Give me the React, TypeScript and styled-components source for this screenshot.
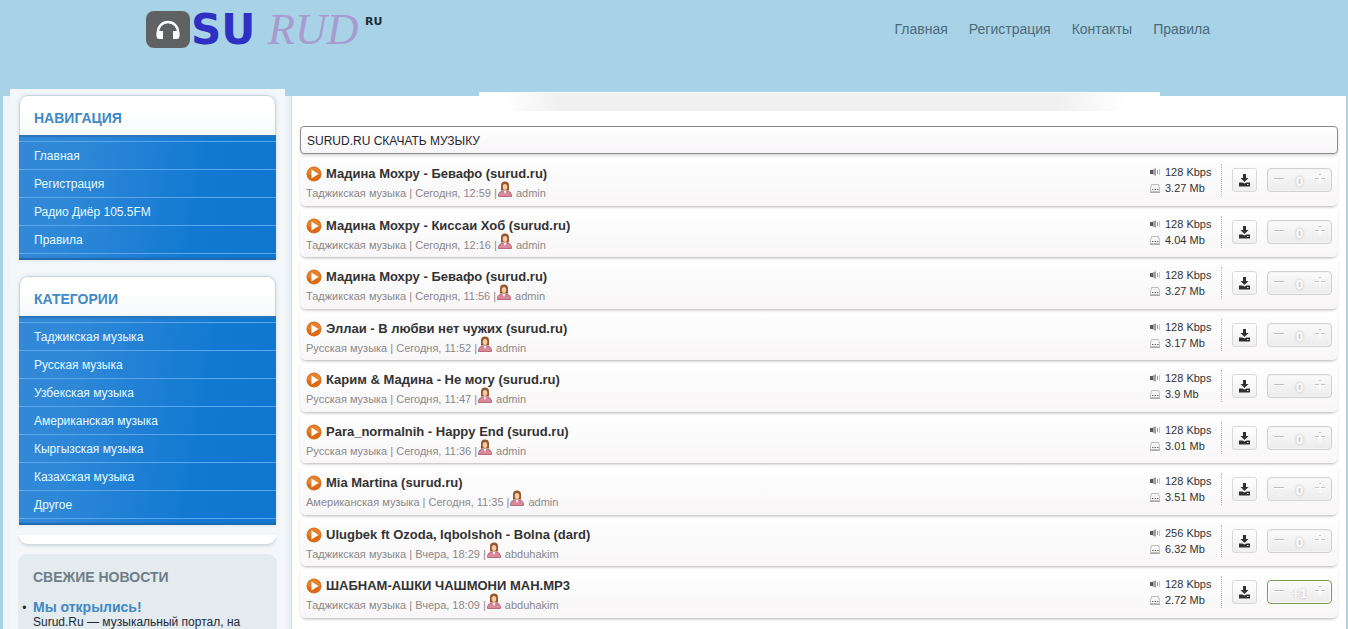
import React from "react";
import styled, { createGlobalStyle } from "styled-components";

const GlobalStyle = createGlobalStyle`
  * { box-sizing: border-box; }
  body { margin: 0; background: #a8d2e6; font-family: "Liberation Sans", Arial, sans-serif; }
  a { color: inherit; text-decoration: none; }
  h1, h2, h3, p, ul, ol { margin: 0; padding: 0; }
`;

const Page = styled.div`
  height: 100vh;
  overflow: hidden;
  padding: 0 2px 0 3px;
  background: #a8d2e6;
`;

const Header = styled.header`
  display: flex;
  justify-content: space-between;
  align-items: flex-start;
  height: 96px;
  padding: 0 136px 0 142px;
`;

const Logo = styled.a`
  display: block;
  line-height: 0;
`;

const TopNav = styled.nav`
  display: flex;
  gap: 21px;
  padding-top: 20px;
  font-size: 14px;
  line-height: 18px;
  color: #4b6b7b;
`;

const Columns = styled.div`
  display: flex;
  align-items: stretch;
  min-height: 533px;
`;

const Sidebar = styled.aside`
  flex: none;
  width: 289px;
  padding: 0 6px 0 7px;
  background: linear-gradient(90deg, #eff5f9 0, #f3f7fa 20px, #f3f7fa 270px, #e9f0f5 100%);
  border-right: 1px solid #ccdbe4;
`;

const SideInner = styled.div`
  margin-top: -7px;
  padding: 6px 8px 0;
  background: #f3f7fa;
`;

const Card = styled.section`
  margin: 0 1px 16px 1px;
  border-radius: 9px 9px 0 0;
  box-shadow: 0 0 4px #d3dfe7;
`;

const CardTitle = styled.h2`
  height: 40px;
  padding: 3px 14px 0;
  border: 1px solid #c5d5df;
  border-bottom: 0;
  border-radius: 9px 9px 0 0;
  background: linear-gradient(#fff 40%, #f5f8f9);
  color: #4189c4;
  font-size: 14px;
  line-height: 38px;
`;

const Menu = styled.ul`
  list-style: none;
  padding: 6px 0;
  background: linear-gradient(100deg, #3389d6 0, #2e87d7 24%, #1279d2 68%, #1077d0 100%);
  box-shadow: inset 0 2px 1px #2a74b9, inset 0 -2px 1px #2169ac;
`;

const MenuItem = styled.li`
  height: 28px;
  border-top: 1px solid #5aa8ea;
  padding: 0 15px;
  font-size: 12px;
  line-height: 28px;
  color: #e4fbff;
  &:last-child { height: 29px; border-bottom: 1px solid #5aa8ea; }
`;

const CardFoot = styled.div`
  height: 9px;
  margin: -6px 1px 10px;
  border-radius: 0 0 9px 9px;
  background: #fff;
  box-shadow: 0 2px 3px #cbd6dd;
`;

const News = styled.section`
  min-height: 90px;
  padding: 13px 15px;
  border-radius: 9px;
  background: #e3ebee;
  color: #222a38;
  font-size: 12px;
  line-height: 14px;
`;

const NewsTitle = styled.h2`
  margin-bottom: 12px;
  font-size: 14px;
  line-height: 20px;
  color: #6f7e87;
`;

const NewsList = styled.ul`
  list-style: "•  ";
`;

const NewsLink = styled.a`
  display: block;
  font-size: 14px;
  line-height: 16px;
  font-weight: bold;
  color: #4189c4;
`;

const Main = styled.main`
  flex: 1;
  min-width: 0;
  padding: 0 8px;
  background: #fff;
`;

const TopStrip = styled.div`
  height: 19px;
  margin: -4px 178px 15px 179px;
  background: linear-gradient(90deg, #fff 4%, #f0f0f0 12%, #f0f0f0 85%, #fff 95%);
  border-top: 1px solid #f8fafb;
`;

const Heading = styled.h1`
  height: 28px;
  padding: 0 6px;
  border: 1px solid #8b898d;
  border-radius: 4px;
  background: linear-gradient(#fff, #f7f5f7);
  box-shadow: 0 2px 3px #ddd;
  color: #262630;
  font-size: 12px;
  font-weight: normal;
  line-height: 28px;
`;

const Tracks = styled.ol`
  list-style: none;
  padding-top: 1px;
`;

const Track = styled.li`
  display: flex;
  align-items: flex-start;
  height: 50px;
  margin-bottom: 1px;
  padding: 9px 6px 0;
  border-radius: 0 0 6px 6px;
  background: linear-gradient(rgba(248, 246, 247, 0), #f8f6f7);
  box-shadow: 0 2px 3px -1px #b5b3b4;
  &:nth-child(odd) { height: 51px; }
`;

const Info = styled.div`
  flex: 1;
  min-width: 0;
  padding-top: 1px;
`;

const TrackTitle = styled.h3`
  display: flex;
  align-items: center;
  gap: 4px;
  font-size: 13px;
  line-height: 18px;
  color: #333;
  svg { flex: none; }
`;

const Meta = styled.p`
  display: flex;
  align-items: flex-end;
  height: 17px;
  white-space: pre;
  color: #8a8889;
  font-size: 11px;
  line-height: 14px;
  svg { flex: none; margin: 0 4px 3px 1px; }
`;

const Quality = styled.ul`
  list-style: none;
  width: 72px;
  height: 32px;
  border-right: 1px dotted #b5b5b5;
  font-size: 11px;
  line-height: 16px;
  color: #333;
`;

const QualityItem = styled.li`
  display: flex;
  align-items: center;
  gap: 4px;
`;

const Download = styled.button`
  display: flex;
  align-items: center;
  justify-content: center;
  width: 25px;
  height: 24px;
  margin: 4px 10px 0;
  padding: 0;
  border: 1px solid #d9d9d9;
  border-radius: 3px;
  background: linear-gradient(#fff, #efefef);
`;

const Vote = styled.div<{ $voted: boolean }>`
  display: flex;
  align-items: center;
  justify-content: space-between;
  width: 65px;
  height: 24px;
  margin-top: 4px;
  padding: 0 5px;
  border: 1px solid ${(p) => (p.$voted ? "#769c50" : "#d0d0d0")};
  border-radius: 4px;
  background: linear-gradient(#fafafa, #ececec);
  box-shadow: inset 0 0 0 1px ${(p) => (p.$voted ? "#fff" : "#f4f4f4")};
`;

const VoteButton = styled.button`
  display: flex;
  width: 12px;
  height: 12px;
  padding: 0;
  border: 0;
  background: none;
`;

const VoteCount = styled.output`
  padding-top: 3px;
  color: #fff;
  font-size: 13px;
  font-weight: bold;
  line-height: 16px;
  text-shadow: 0 0 3px #a8a8a8;
`;

const LogoArt = () => (
  <svg width="240" height="60" viewBox="0 -10 240 60" role="img" aria-label="Surud.ru">
    <rect x="1" y="1" width="44" height="37" rx="8" fill="#606163" />
    <path d="M13 24v-2a10 10 0 0 1 20 0v2" fill="none" stroke="#fff" strokeWidth="2.4" />
    <path d="M11.500 23q0-2 2-2h4.500v8h-3.500q-3 0-3-3zM34.500 23q0-2-2-2H28v8h3.500q3 0 3-3z" fill="#fff" />
    <text x="46" y="34" fill="#2f2fc4" fontFamily="DejaVu Sans, sans-serif" fontSize="42" fontWeight="bold">SU</text>
    <text x="123" y="34" fill="#a79bd0" fontFamily="Liberation Serif, serif" fontSize="44" fontStyle="italic">RUD</text>
    <text x="220" y="15" fill="#182e38" fontFamily="DejaVu Sans, sans-serif" fontSize="11" fontWeight="bold">RU</text>
  </svg>
);

const PlayIcon = () => (
  <svg width="16" height="16" viewBox="0 0 16 16" aria-hidden="true">
    <circle cx="8" cy="8" r="7.300" fill="#e8822a" />
    <path d="M1 8a7 7 0 0 0 14 0q-7 3-14 0z" fill="#dd6a12" />
    <circle cx="8" cy="8" r="7" fill="none" stroke="#c9702c" strokeWidth=".8" />
    <path d="M5.500 3.500v9L12.500 8z" fill="#fff" />
  </svg>
);

const UserIcon = () => (
  <svg width="14" height="16" viewBox="0 0 14 16" aria-hidden="true">
    <path d="M3 9.500V4.500a4 4 0 0 1 8 0v5z" fill="#94562d" />
    <ellipse cx="7" cy="6" rx="2.300" ry="3" fill="#f6c9a4" />
    <path d="M.5 15.500v-2q.5-3 4.500-3.500l2 2 2-2q4 .5 4.500 3.500v2z" fill="#d98a9a" stroke="#b0566c" strokeWidth=".8" />
    <path d="M5.500 10l1.500 3 1.500-3z" fill="#fff" />
  </svg>
);

const SpeakerIcon = () => (
  <svg width="11" height="10" viewBox="0 0 11 10" aria-hidden="true">
    <path d="M0 3h2l4-2v8L2 7H0z" fill="#a0a0a0" />
    <path d="M0 3h3v4H0z" fill="#5a5a5a" />
    <path d="M7.500 3v4" stroke="#999" fill="none" />
    <path d="M9.500 2v6" stroke="#c4c4c4" fill="none" />
  </svg>
);

const SizeIcon = () => (
  <svg width="11" height="10" viewBox="0 0 11 10" aria-hidden="true">
    <path d="M1.500 1.500h7l1 4v3h-9v-3z" fill="#f5f5f5" stroke="#bdbdbd" />
    <path d="M2 6.500h1.500M4.500 6.500H6M7 6.500h1.500" stroke="#777" />
    <path d="M0 9.500h10" stroke="#aaa" />
  </svg>
);

const DownloadIcon = () => (
  <svg width="13" height="13" viewBox="0 0 13 13" aria-hidden="true">
    <path d="M5 0h3v4h2.500l-4 4-4-4H5z" fill="#303030" />
    <path d="M1 8.500h3.500l2 1 2-1H12v4H1z" fill="#303030" />
    <path d="M9 10.500h1.500" stroke="#ddd" />
  </svg>
);

const MinusIcon = () => (
  <svg width="12" height="12" viewBox="0 0 12 12" aria-hidden="true">
    <path d="M1 4.500h10" stroke="#bcbcbc" />
    <path d="M1 5.500h10" stroke="#fff" />
  </svg>
);

const PlusIcon = () => (
  <svg width="12" height="12" viewBox="0 0 12 12" aria-hidden="true">
    <path d="M6 1v9M1 5.500h10" stroke="#fff" />
    <path d="M1 4.500h4M7 4.500h4M5 .5h2" stroke="#c4c4c4" />
  </svg>
);

const topLinks = ["Главная", "Регистрация", "Контакты", "Правила"];
const navigation = ["Главная", "Регистрация", "Радио Диёр 105.5FM", "Правила"];
const categories = [
  "Таджикская музыка", "Русская музыка", "Узбекская музыка", "Американская музыка",
  "Кыргызская музыка", "Казахская музыка", "Другое",
];

const tracks = [
  ["Мадина Мохру - Бевафо (surud.ru)", "Таджикская музыка", "Сегодня, 12:59", "admin", "128", "3.27", "0"],
  ["Мадина Мохру - Киссаи Хоб (surud.ru)", "Таджикская музыка", "Сегодня, 12:16", "admin", "128", "4.04", "0"],
  ["Мадина Мохру - Бевафо (surud.ru)", "Таджикская музыка", "Сегодня, 11:56", "admin", "128", "3.27", "0"],
  ["Эллаи - В любви нет чужих (surud.ru)", "Русская музыка", "Сегодня, 11:52", "admin", "128", "3.17", "0"],
  ["Карим & Мадина - Не могу (surud.ru)", "Русская музыка", "Сегодня, 11:47", "admin", "128", "3.9", "0"],
  ["Para_normalnih - Happy End (surud.ru)", "Русская музыка", "Сегодня, 11:36", "admin", "128", "3.01", "0"],
  ["Mia Martina (surud.ru)", "Американская музыка", "Сегодня, 11:35", "admin", "128", "3.51", "0"],
  ["Ulugbek ft Ozoda, Iqbolshoh - Bolna (dard)", "Таджикская музыка", "Вчера, 18:29", "abduhakim", "256", "6.32", "0"],
  ["ШАБНАМ-АШКИ ЧАШМОНИ МАН.MP3", "Таджикская музыка", "Вчера, 18:09", "abduhakim", "128", "2.72", "+1"],
];

const MenuCard = ({ title, items }: { title: string; items: string[] }) => (
  <Card>
    <CardTitle>{title}</CardTitle>
    <Menu>
      {items.map((item) => (
        <MenuItem key={item}><a href="#">{item}</a></MenuItem>
      ))}
    </Menu>
  </Card>
);

export default function App() {
  return (
    <Page>
      <GlobalStyle />
      <Header>
        <Logo href="#"><LogoArt /></Logo>
        <TopNav>
          {topLinks.map((link) => <a href="#" key={link}>{link}</a>)}
        </TopNav>
      </Header>
      <Columns>
        <Sidebar>
          <SideInner>
            <MenuCard title="НАВИГАЦИЯ" items={navigation} />
            <MenuCard title="КАТЕГОРИИ" items={categories} />
            <CardFoot />
            <News>
              <NewsTitle>СВЕЖИЕ НОВОСТИ</NewsTitle>
              <NewsList>
                <li>
                  <NewsLink href="#">Мы открылись!</NewsLink>
                  <p>Surud.Ru — музыкальный портал, на</p>
                </li>
              </NewsList>
            </News>
          </SideInner>
        </Sidebar>
        <Main>
          <TopStrip />
          <Heading>SURUD.RU СКАЧАТЬ МУЗЫКУ</Heading>
          <Tracks>
            {tracks.map(([title, genre, date, user, rate, size, votes], i) => (
              <Track key={i}>
                <Info>
                  <TrackTitle><PlayIcon /><a href="#">{title}</a></TrackTitle>
                  <Meta>
                    <a href="#">{genre}</a>{" | "}{date}{" |"}<UserIcon /><a href="#">{user}</a>
                  </Meta>
                </Info>
                <Quality>
                  <QualityItem><SpeakerIcon />{rate} Kbps</QualityItem>
                  <QualityItem><SizeIcon />{size} Mb</QualityItem>
                </Quality>
                <Download type="button" aria-label="Скачать"><DownloadIcon /></Download>
                <Vote $voted={votes !== "0"}>
                  <VoteButton type="button" aria-label="Минус"><MinusIcon /></VoteButton>
                  <VoteCount>{votes}</VoteCount>
                  <VoteButton type="button" aria-label="Плюс"><PlusIcon /></VoteButton>
                </Vote>
              </Track>
            ))}
          </Tracks>
        </Main>
      </Columns>
    </Page>
  );
}
